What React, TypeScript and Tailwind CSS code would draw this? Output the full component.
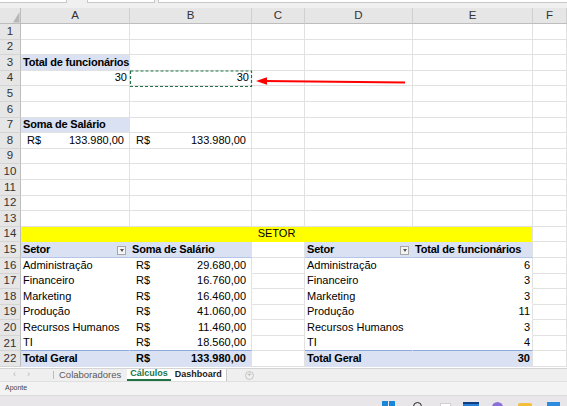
import type { ReactNode } from "react";

const cols = ["A", "B", "C", "D", "E", "F"];

type CellProps = {
  children?: ReactNode;
  className?: string;
  r?: string;
  b?: string;
};

const Cell = ({ children, className = "", r = "border-r-[#e1e1e1]", b = "border-b-[#e1e1e1]" }: CellProps) => (
  <div className={`h-[15.6px] flex items-end pb-[1px] px-[2px] whitespace-nowrap border-r border-b text-[11px] leading-[13px] text-black ${r} ${b} ${className}`}>
    {children}
  </div>
);

const RowHead = ({ n }: { n: number }) => (
  <div className="h-[15.6px] bg-[#e6e6e6] border-r border-r-[#bdbdbd] border-b border-b-[#d4d4d4] flex items-center justify-center text-[11.5px] text-[#333]">
    {n}
  </div>
);

const Acct = ({ v, bold = false }: { v: string; bold?: boolean }) => (
  <div className={`flex w-full pl-[4px] pr-[3px] ${bold ? "font-bold" : ""}`}>
    <span>R$</span>
    <span className="ml-auto">{v}</span>
  </div>
);

const Dropdown = () => (
  <span className="ml-auto mr-[1px] mb-[1px] w-[9px] h-[9px] border border-[#a6a6a6] bg-[#f4f4f4] flex items-center justify-center">
    <span className="w-0 h-0 border-l-[2px] border-r-[2px] border-t-[3px] border-l-transparent border-r-transparent border-t-[#555]" />
  </span>
);

const pivotRows = [
  { setor: "Administração", sal: "29.680,00", qtd: 6 },
  { setor: "Financeiro", sal: "16.760,00", qtd: 3 },
  { setor: "Marketing", sal: "16.460,00", qtd: 3 },
  { setor: "Produção", sal: "41.060,00", qtd: 11 },
  { setor: "Recursos Humanos", sal: "11.460,00", qtd: 3 },
  { setor: "TI", sal: "18.560,00", qtd: 4 },
];

const blue = "bg-[#d9e1f2]";

const emptyRow = (n: number) => (
  <>
    <RowHead n={n} />
    {cols.map((c) => (
      <Cell key={c} />
    ))}
  </>
);

const App = () => {
  return (
    <div className="relative w-[567px] h-[406px] overflow-hidden bg-white font-['Liberation_Sans',Arial,sans-serif] flex flex-col">
      {/* formula bar remnant */}
      <div className="h-[8px] bg-[#f0f0f0] flex items-start">
        <div className="w-[67px] h-[3px] bg-white border-b border-r border-[#c8c8c8]" />
        <div className="ml-[20px] w-[68px] h-[3px] bg-white border-b border-x border-[#c8c8c8]" />
        <div className="ml-[3px] flex-1 h-[3px] bg-white border-b border-l border-[#c8c8c8]" />
      </div>

      {/* sheet */}
      <div className="grid grid-cols-[21px_109px_122px_53px_108px_120px_34px]">
        {/* column headers */}
        <div className="h-[16px] bg-[#e6e6e6] border-r border-b border-[#bdbdbd] relative">
          <svg width="21" height="16" className="absolute inset-0">
            <polygon points="13,14.5 19.5,14.5 19.5,4" fill="#b7b7b7" />
          </svg>
        </div>
        {cols.map((c) => (
          <div
            key={c}
            className="h-[16px] bg-[#e6e6e6] border-r border-r-[#d0d0d0] border-b border-b-[#bdbdbd] flex items-center justify-center text-[11.5px] text-[#333]"
          >
            {c}
          </div>
        ))}

        {emptyRow(1)}
        {emptyRow(2)}

        {/* row 3 */}
        <RowHead n={3} />
        <Cell className={`${blue} font-bold tracking-[-0.2px]`}>Total de funcionários</Cell>
        {cols.slice(1).map((c) => (
          <Cell key={c} />
        ))}

        {/* row 4 */}
        <RowHead n={4} />
        <Cell className="justify-end">30</Cell>
        <Cell className="justify-end">30</Cell>
        {cols.slice(2).map((c) => (
          <Cell key={c} />
        ))}

        {emptyRow(5)}
        {emptyRow(6)}

        {/* row 7 */}
        <RowHead n={7} />
        <Cell className={`${blue} font-bold tracking-[-0.2px]`}>Soma de Salário</Cell>
        {cols.slice(1).map((c) => (
          <Cell key={c} />
        ))}

        {/* row 8 */}
        <RowHead n={8} />
        <Cell>
          <Acct v="133.980,00" />
        </Cell>
        <Cell>
          <Acct v="133.980,00" />
        </Cell>
        {cols.slice(2).map((c) => (
          <Cell key={c} />
        ))}

        {emptyRow(9)}
        {emptyRow(10)}
        {emptyRow(11)}
        {emptyRow(12)}
        {emptyRow(13)}

        {/* row 14 */}
        <RowHead n={14} />
        <Cell className="col-span-5 justify-center bg-[#ffff00]" r="border-r-[#e1e1e1]" b="border-b-[#ffff00]">
          SETOR
        </Cell>
        <Cell />

        {/* row 15 pivot headers */}
        <RowHead n={15} />
        <Cell className={`${blue} font-bold tracking-[-0.2px]`} r="border-r-[#d9e1f2]" b="border-b-[#b4c6e7]">
          Setor
          <Dropdown />
        </Cell>
        <Cell className={`${blue} font-bold tracking-[-0.2px]`} b="border-b-[#b4c6e7]">
          Soma de Salário
        </Cell>
        <Cell />
        <Cell className={`${blue} font-bold tracking-[-0.2px]`} r="border-r-[#d9e1f2]" b="border-b-[#b4c6e7]">
          Setor
          <Dropdown />
        </Cell>
        <Cell className={`${blue} font-bold tracking-[-0.2px]`} b="border-b-[#b4c6e7]">
          Total de funcionários
        </Cell>
        <Cell />

        {/* rows 16-21 pivot data */}
        {pivotRows.map((p, i) => {
          const last = i === pivotRows.length - 1;
          const bb = last ? "border-b-[#8ea9db]" : "border-b-white";
          return (
            <div key={p.setor} className="contents">
              <RowHead n={16 + i} />
              <Cell r="border-r-white" b={bb}>
                {p.setor}
              </Cell>
              <Cell b={bb}>
                <Acct v={p.sal} />
              </Cell>
              <Cell />
              <Cell r="border-r-white" b={bb}>
                {p.setor}
              </Cell>
              <Cell className="justify-end" b={bb}>
                {p.qtd}
              </Cell>
              <Cell />
            </div>
          );
        })}

        {/* row 22 totals */}
        <RowHead n={22} />
        <Cell className={`${blue} font-bold tracking-[-0.2px]`} r="border-r-[#d9e1f2]" b="border-b-[#d9e1f2]">
          Total Geral
        </Cell>
        <Cell className={blue} b="border-b-[#d9e1f2]">
          <Acct v="133.980,00" bold />
        </Cell>
        <Cell />
        <Cell className={`${blue} font-bold tracking-[-0.2px]`} r="border-r-[#d9e1f2]" b="border-b-[#d9e1f2]">
          Total Geral
        </Cell>
        <Cell className={`${blue} font-bold justify-end`} b="border-b-[#d9e1f2]">
          30
        </Cell>
        <Cell />
      </div>

      {/* sheet tabs */}
      <div className="h-[13px] mt-[1px] bg-[#efefef] border-t border-[#d4d4d4] flex items-stretch text-[9px]">
        <div className="w-[53px] flex items-center text-[#b5b5b5] text-[9px] pl-[13px] gap-[11px]">
          <span>‹</span>
          <span>›</span>
        </div>
        <div className="w-px my-[2px] bg-[#bdbdbd]" />
        <div className="px-[5px] flex items-center text-[#595959] text-[9.5px]">Colaboradores</div>
        <div className="ml-[1px] px-[3px] bg-white border-b-2 border-[#217346] flex items-center font-bold text-[#217346]">
          Cálculos
        </div>
        <div className="px-[4px] bg-white border-r border-[#c8c8c8] flex items-center font-bold text-[#222]">
          Dashboard
        </div>
        <div className="ml-[18px] flex items-center">
          <span className="w-[9px] h-[9px] rounded-full border border-[#c4c4c4] flex items-center justify-center text-[8px] leading-none text-[#b0b0b0]">
            +
          </span>
        </div>
      </div>

      {/* status bar */}
      <div className="h-[14px] bg-[#f3f3f3] border-t border-[#e0e0e0] flex items-center pl-[5px] text-[7px] text-[#444]">
        Aponte
      </div>

      {/* taskbar */}
      <div className="flex-1 bg-[#e9e6e9] border-t border-[#dcdcdc] overflow-hidden flex items-start pl-[382px]">
        <div className="mt-[5px] flex gap-[1px]">
          <span className="w-[6px] h-[6px] bg-[#1a86d9]" />
          <span className="w-[6px] h-[6px] bg-[#1a86d9]" />
        </div>
        <span className="ml-[18px] mt-[6px] w-[9px] h-[9px] rounded-full border-[1.5px] border-[#222]" />
        <span className="ml-[18px] mt-[7px] w-[11px] h-[8px] bg-white border border-[#d0d0d0]" />
        <span className="ml-[12px] mt-[6px] w-[16px] h-[6px] bg-[#2a7fd4] border-t-2 border-[#0f3e82]" />
        <span className="ml-[13px] mt-[6px] w-[11px] h-[11px] rounded-full bg-[#8b6fd8]" />
        <span className="ml-[15px] mt-[7px] w-[14px] h-[6px] bg-[#f2bf3a] rounded-t-[2px]" />
        <span className="ml-[15px] mt-[6px] w-[13px] h-[6px] bg-[#2c8be0]" />
      </div>

      {/* overlays: copy marquee and red arrow */}
      <svg width="567" height="406" className="absolute inset-0 pointer-events-none">
        <rect x="130.5" y="71" width="121" height="15.5" fill="none" stroke="#217346" strokeWidth="1.2" strokeDasharray="3 2" />
        <line x1="405" y1="82.5" x2="264" y2="81" stroke="#ff0000" strokeWidth="2" />
        <polygon points="256,81 267,77.2 267,84.8" fill="#ff0000" />
      </svg>
    </div>
  );
};

export default App;
